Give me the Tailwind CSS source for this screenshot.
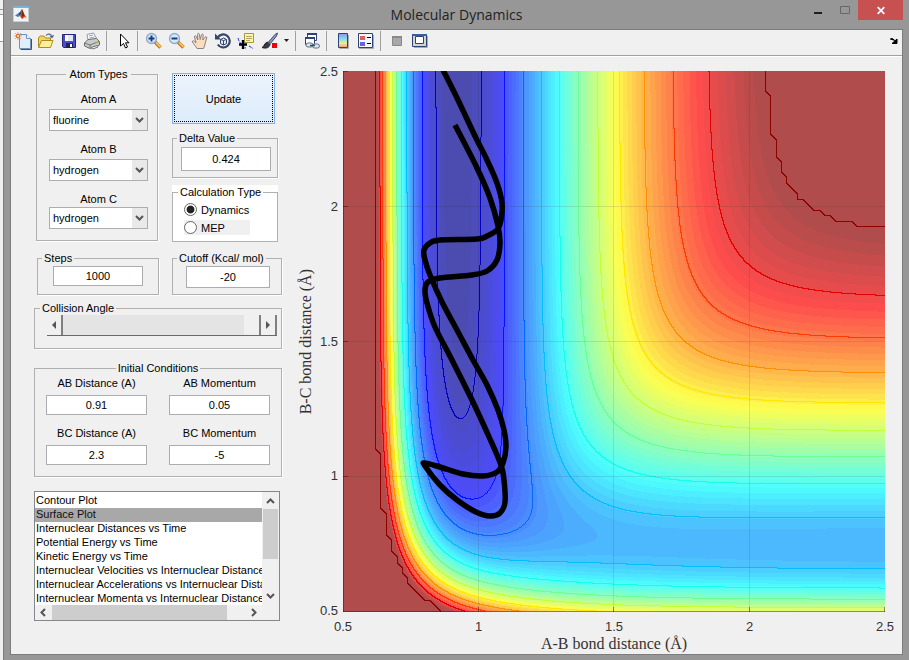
<!DOCTYPE html>
<html lang="en">
<head>
  <meta charset="UTF-8" />
  <meta name="viewport" content="width=device-width, initial-scale=1.0"/>
  <title>Molecular Dynamics</title>
  <script src="https://cdn.jsdelivr.net/npm/@tailwindcss/browser@4"></script>
</head>
<body class="flex min-h-screen bg-[#979797] font-['Liberation_Sans',Arial,sans-serif] text-[11px] leading-[14px] text-black">

  <!-- Edge of the window behind -->
  <div class="w-[3px] bg-[#efefef] flex flex-col">
    <div class="h-[10px] border-b border-[#979797]"></div>
    <div class="h-[5px] border-b border-[#979797]"></div>
    <div class="h-[27px] bg-white border-b border-[#979797]"></div>
  </div>

  <div class="flex-1 min-w-0 flex flex-col border-l border-[#7d7d7d] pl-[6px] pr-[6px] pb-[5px]">

    <!-- Title bar -->
    <header class="h-[29px] flex items-start">
      <svg class="mt-[6px] ml-[3px]" width="16" height="16" viewBox="0 0 16 16">
        <rect x="0.5" y="0.5" width="15" height="15" fill="#eef3f6" stroke="#c9cfd3"/>
        <rect width="16" height="2" fill="#79b4d8"/>
        <path d="M2 9.5 5 7.5 7 10 5 11Z" fill="#3a7fc4"/>
        <path d="M5 7.5 7 6 9 3 8.500 8 7 10Z" fill="#26527f"/>
        <path d="M9 3C10.500 6 12 10 14 12 12 10.800 11 11 9.500 13 8.500 13 8 11 7 10 8 8 8.500 5 9 3Z" fill="#d8501c"/>
        <path d="M9 3C10 5 11 8 11.500 10 10 10 9 11 8.500 12Z" fill="#8a2411"/>
      </svg>
      <h1 class="flex-1 pl-[80px] pt-[4px] text-center font-['Open_Sans',sans-serif] text-[14px] leading-[22px] text-[#222]">Molecular Dynamics</h1>
      <div class="flex">
        <button aria-label="Minimize" class="w-[27px] h-[20px] flex justify-center">
          <svg width="8" height="20" viewBox="0 0 8 20"><path d="M0 12h8v2H0z" fill="#1e1e1e"/></svg>
        </button>
        <button aria-label="Maximize" class="w-[27px] h-[20px] flex justify-center">
          <svg width="10" height="20" viewBox="0 0 10 20"><path d="M.5 6.500h9v7h-9z" fill="none" stroke="#666"/></svg>
        </button>
        <button aria-label="Close" class="w-[45px] h-[20px] bg-[#c75050] flex justify-center">
          <svg width="8" height="20" viewBox="0 0 8 20"><path d="M.7 7.200l6.600 6.600M7.300 7.200.7 13.800" stroke="#fff" stroke-width="1.700"/></svg>
        </button>
      </div>
    </header>

    <div class="flex-1 bg-[#f0f0f0] border border-[#7d7d7d] flex flex-col">

      <!-- Toolbar -->
      <nav class="h-[26px] shrink-0 flex items-center pb-[3px] border-b border-[#a0a0a0] shadow-[0_1px_0_#fff]">
        <button aria-label="New" class="w-[23px] flex justify-center">
          <svg width="18" height="18" viewBox="0 0 18 18">
            <path d="M5.500 2.500h7l4 4v10h-11z" fill="#dfeefc" stroke="#7291b8"/><path d="M12.500 2.500v4h4" fill="#fff" stroke="#7291b8"/>
            <path d="M17.500 7v10.500h-11" fill="none" stroke="#3c5070"/>
            <path d="M1 1l6 6M7 1 1 7M4 0v8M0 4h8" stroke="#f0a080" stroke-width="1"/><circle cx="4" cy="4" r="1.800" fill="#ffe070" stroke="#e06030"/>
          </svg>
        </button>
        <button aria-label="Open" class="w-[23px] flex justify-center">
          <svg width="18" height="18" viewBox="0 0 18 18">
            <path d="M1.500 15V6l1.500-2h4l1.500 2h5V9" fill="#f3d460" stroke="#b08a1c"/>
            <path d="M1.500 15.500 4.500 8.500H16l-2.500 7z" fill="#fdee9a" stroke="#b08a1c"/>
            <path d="M9 3.500C11 1 14 2 15 5M13 4.500l2.200 1L16.500 3" fill="none" stroke="#4c6a90" stroke-width="1.200"/>
          </svg>
        </button>
        <button aria-label="Save" class="w-[23px] flex justify-center">
          <svg width="18" height="18" viewBox="0 0 18 18">
            <path d="M2.500 2.500h13v13h-12l-1-1z" fill="#4c4cc8" stroke="#25257c"/>
            <path d="M5 3h8v6H5z" fill="#dfe6f6"/><path d="M5 3h3v6H5z" fill="#fff"/>
            <path d="M6 11h7v5H6z" fill="#20205a"/><path d="M10 12h2v3h-2z" fill="#fff"/>
          </svg>
        </button>
        <button aria-label="Print" class="w-[23px] flex justify-center">
          <svg width="18" height="18" viewBox="0 0 18 18">
            <path d="M5 8 4 2.500 10.500 1 14 7z" fill="#fdfdfd" stroke="#999"/><path d="M6 4l4-1M6.500 6l5-1" stroke="#8aa0c0"/>
            <path d="M1.500 11 5 7.500 13.500 6.500 16.500 9.500V13L7 16.500 1.500 14z" fill="#c9c9c9" stroke="#6d6d6d"/>
            <path d="M1.500 11 7 13 16 9.500M7 13v3" fill="none" stroke="#777"/><path d="M8 15.500l6-2 1 1.500-5 2z" fill="#eee" stroke="#777"/><path d="M13 11l1.500-.5" stroke="#c8b400"/>
          </svg>
        </button>
        <span class="w-[4px] h-5 border-r border-[#a0a0a0] mr-[4px]"></span>
        <button aria-label="Edit Plot" class="w-[23px] flex justify-center">
          <svg width="18" height="18" viewBox="0 0 18 18"><path d="M6.500 2v12l3-2.500 2 4.500 2-1-2-4.200h3.500z" fill="#fff" stroke="#000"/></svg>
        </button>
        <span class="w-[4px] h-5 border-r border-[#a0a0a0] mr-[4px]"></span>
        <button aria-label="Zoom In" class="w-[23px] flex justify-center">
          <svg width="18" height="18" viewBox="0 0 18 18">
            <path d="M10 10l5.500 5.500" stroke="#b86a1c" stroke-width="3.400"/><path d="M11 10.500l4.500 4.500" stroke="#fbc65c" stroke-width="1.800"/>
            <circle cx="6.500" cy="6.500" r="5" fill="#cfeafa" stroke="#92a9c9" stroke-width="1.300"/><path d="M3.500 6.500h6M6.500 3.500v6" stroke="#1c3a80" stroke-width="2"/>
          </svg>
        </button>
        <button aria-label="Zoom Out" class="w-[23px] flex justify-center">
          <svg width="18" height="18" viewBox="0 0 18 18">
            <path d="M10 10l5.500 5.500" stroke="#b86a1c" stroke-width="3.400"/><path d="M11 10.500l4.500 4.500" stroke="#fbc65c" stroke-width="1.800"/>
            <circle cx="6.500" cy="6.500" r="5" fill="#cfeafa" stroke="#92a9c9" stroke-width="1.300"/><path d="M3.500 6.500h6" stroke="#1c3a80" stroke-width="2"/>
          </svg>
        </button>
        <button aria-label="Pan" class="w-[23px] flex justify-center">
          <svg width="18" height="18" viewBox="0 0 18 18">
            <path d="M6 16.500C4.500 14 2.500 12 1.500 10 1 8.500 2.500 8.300 3.500 9.500L5 11 3.500 5C3.200 3.500 4.800 3.300 5.200 4.500L6.800 8 6.500 2.500C6.500 1 8.200 1 8.400 2.300L9.200 7.500 10.500 2.800C11 1.500 12.500 2 12.200 3.300L11.800 8 14 5.200C14.800 4.200 16.200 4.800 15.700 6L14.500 10 13.500 14 12.500 16.500Z" fill="#fbdcbc" stroke="#8a8088"/>
          </svg>
        </button>
        <button aria-label="Rotate 3D" class="w-[23px] flex justify-center">
          <svg width="18" height="18" viewBox="0 0 18 18">
            <path d="M3.500 6A6.500 6.500 0 1 1 3.800 12.500" fill="none" stroke="#33466c" stroke-width="2.200"/><path d="M1 1.500v6h6z" fill="#33466c"/>
            <path d="M6.500 7.500 9.500 6l3 1.500v4l-3 1.500-3-1.500zM6.500 7.500l3 1 3-1M9.500 8.500V13" fill="#e6edf6" stroke="#33466c"/>
          </svg>
        </button>
        <button aria-label="Data Cursor" class="w-[23px] flex justify-center">
          <svg width="18" height="18" viewBox="0 0 18 18">
            <path d="M7.500 1.500h9v9h-9z" fill="#fbf7a8" stroke="#a39a3c"/><path d="M9 4.500h6M9 6.500h6M9 8.500h4" stroke="#b0a860"/>
            <path d="M1 6c1 4 2 4 3 6 2 3 3 4 5 4M12 14l4 2.500" fill="none" stroke="#2020ee" stroke-dasharray="3 1"/>
            <path d="M6 8v9M2 12.500h8" stroke="#000" stroke-width="2.400"/>
          </svg>
        </button>
        <button aria-label="Brush" class="w-[25px] flex justify-center">
          <svg width="18" height="18" viewBox="0 0 18 18">
            <path d="M7.500 10 14 2.500 16.500 1 15.500 4 9.500 11.500z" fill="#8898b8" stroke="#44506c"/>
            <path d="M1 15.500c2 0 2-4.500 5.500-5.500L9 12.500C8.500 15.500 5 17 1 15.500z" fill="#3a3a44" stroke="#1c1c22"/>
            <path d="M11 11h5v5h-5z" fill="#f00000"/>
          </svg>
        </button>
        <button aria-label="Brush options" class="w-[9px] flex justify-center"><svg width="5" height="4" viewBox="0 0 5 4"><path d="M0 0h5L2.500 3z" fill="#222"/></svg></button>
        <span class="w-[5px] h-5 border-r border-[#a0a0a0] mr-[4px]"></span>
        <button aria-label="Link Plot" class="w-[23px] flex justify-center">
          <svg width="18" height="18" viewBox="0 0 18 18">
            <path d="M4.500 1.500h9v7h-9z" fill="#fff" stroke="#2d4278"/><path d="M4 1h10v2H4z" fill="#2d4278"/>
            <path d="M2.500 5.500h9v7h-9z" fill="#fff" stroke="#2d4278"/><path d="M2 5h10v2H2z" fill="#2d4278"/>
            <rect x="3" y="11" width="7" height="4" rx="2" fill="#dde6ee" stroke="#5c7288"/><rect x="9.500" y="12" width="7" height="4" rx="2" fill="#dde6ee" stroke="#5c7288"/><path d="M7 13.500h5" stroke="#36495c" stroke-width="1.500"/>
          </svg>
        </button>
        <span class="w-[4px] h-5 border-r border-[#a0a0a0] mr-[4px]"></span>
        <button aria-label="Insert Colorbar" class="w-[23px] flex justify-center">
          <svg width="18" height="18" viewBox="0 0 18 18">
            <defs><linearGradient id="cbar" x2="0" y2="1"><stop stop-color="#9a8cec"/><stop offset=".35" stop-color="#7cd8f4"/><stop offset=".7" stop-color="#f4eb90"/><stop offset="1" stop-color="#f49a78"/></linearGradient></defs>
            <path d="M14.500 3v13.500h-9" fill="none" stroke="#aaa"/><path d="M4.500 1.500h9v14h-9z" fill="url(#cbar)" stroke="#2d4278"/>
          </svg>
        </button>
        <button aria-label="Insert Legend" class="w-[23px] flex justify-center">
          <svg width="18" height="18" viewBox="0 0 18 18">
            <path d="M16.500 3v13.500H2" fill="none" stroke="#aaa"/><path d="M1.500 1.500h14v14h-14z" fill="#f8f8fc" stroke="#2d4278"/>
            <path d="M3 4h5v4H3z" fill="#e06060"/><path d="M3 10h5v4H3z" fill="#6464e0"/><path d="M10 5.500h4M10 11.500h4" stroke="#000"/>
          </svg>
        </button>
        <span class="w-[4px] h-5 border-r border-[#a0a0a0] mr-[4px]"></span>
        <button aria-label="Hide Plot Tools" class="w-[23px] flex justify-center">
          <svg width="18" height="18" viewBox="0 0 18 18"><path d="M4.500 4.500h9v9h-9z" fill="#a8a8a8" stroke="#888"/><path d="M4 4h10v2H4z" fill="#888"/></svg>
        </button>
        <button aria-label="Show Plot Tools" class="w-[23px] flex justify-center">
          <svg width="18" height="18" viewBox="0 0 18 18">
            <path d="M16.500 4v11.500H3" fill="none" stroke="#aaa"/><path d="M1.500 2.500h14v12h-14z" fill="#d4d4c8" stroke="#2d4278"/>
            <path d="M1 2h15v2H1z" fill="#3c5ca0"/><path d="M4.500 4.500h8v7h-8z" fill="#fff" stroke="#2d4278"/>
          </svg>
        </button>
        <button aria-label="Dock Figure" class="ml-auto mr-[4px]">
          <svg width="8" height="6" viewBox="0 0 8 6"><path d="M0 1.500 1.500 0 5.500 3M7 1v4.500H2z" fill="#000" stroke="#000"/></svg>
        </button>
      </nav>

      <main class="flex-1 flex items-start pt-[11px] pr-[17px]">

        <!-- Controls -->
        <aside class="w-[248px] shrink-0 ml-[23px] flex flex-col">
          <div class="flex justify-between h-[184px]">
            <fieldset class="w-[122px] h-[174px] ml-[2px] border border-[#b0b0b0] shadow-[1px_1px_0_#fff] flex flex-col items-center pl-[3px] pt-[11px]">
              <legend class="mx-auto px-1">Atom Types</legend>
              <label for="atomA">Atom A</label>
              <div class="relative mt-[3px] mb-[11px]">
                <select id="atomA" class="block appearance-none w-[99px] h-[22px] pl-[3px] border border-[#abadb3] bg-white"><option>fluorine</option><option>hydrogen</option></select>
                <svg class="absolute right-px top-px pointer-events-none bg-[#e9e9e9]" width="15" height="20" viewBox="0 0 15 20"><path d="M4 8 7.500 11.500 11 8" fill="none" stroke="#555" stroke-width="2"/></svg>
              </div>
              <label for="atomB">Atom B</label>
              <div class="relative mt-[3px] mb-[11px]">
                <select id="atomB" class="block appearance-none w-[99px] h-[22px] pl-[3px] border border-[#abadb3] bg-white"><option>hydrogen</option><option>fluorine</option></select>
                <svg class="absolute right-px top-px pointer-events-none bg-[#e9e9e9]" width="15" height="20" viewBox="0 0 15 20"><path d="M4 8 7.500 11.500 11 8" fill="none" stroke="#555" stroke-width="2"/></svg>
              </div>
              <label for="atomC">Atom C</label>
              <div class="relative mt-px">
                <select id="atomC" class="block appearance-none w-[99px] h-[22px] pl-[3px] border border-[#abadb3] bg-white"><option>hydrogen</option><option>fluorine</option></select>
                <svg class="absolute right-px top-px pointer-events-none bg-[#e9e9e9]" width="15" height="20" viewBox="0 0 15 20"><path d="M4 8 7.500 11.500 11 8" fill="none" stroke="#555" stroke-width="2"/></svg>
              </div>
            </fieldset>

            <div class="w-[110px] flex flex-col">
              <button class="w-[103px] h-[51px] mt-[6px] border border-[#7eb4ea] bg-linear-to-b from-[#ecf4fc] to-[#dcecfc] p-px">
                <span class="flex h-full items-center justify-center border border-dotted border-black">Update</span>
              </button>
              <fieldset class="w-[106px] h-[47px] mt-[7px] border border-[#b0b0b0] shadow-[1px_1px_0_#fff] flex justify-center pl-[2px] pt-[2px]">
                <legend class="ml-[2px] px-[2px]"><label for="delta">Delta Value</label></legend>
                <input id="delta" value="0.424" class="w-[90px] h-[24px] border border-[#abadb3] bg-white text-center"/>
              </fieldset>
              <div class="w-[106px] mt-[7px] bg-white">
                <fieldset class="h-[57px] border border-[#b0b0b0] pl-[11px] pt-[3px] flex flex-col gap-[3px]">
                  <legend class="-ml-[6px] px-[2px]">Calculation Type</legend>
                  <label class="flex items-center h-[15px]"><input type="radio" name="calc" checked class="appearance-none w-[13px] h-[13px] rounded-full border border-[#666] bg-white bg-radial from-[#222] from-45% to-white to-55% mr-[4px]"/>Dynamics</label>
                  <label class="flex items-center h-[15px] w-[66px] bg-[#f0f0f0]"><input type="radio" name="calc" class="appearance-none w-[13px] h-[13px] rounded-full border border-[#666] bg-white mr-[4px]"/>MEP</label>
                </fieldset>
              </div>
            </div>
          </div>

          <div class="flex justify-between">
            <fieldset class="w-[122px] h-[44px] ml-[3px] border border-[#b0b0b0] shadow-[1px_1px_0_#fff] flex justify-center pt-px">
              <legend class="ml-[4px] px-[2px]"><label for="steps">Steps</label></legend>
              <input id="steps" value="1000" class="w-[90px] h-[20px] border border-[#abadb3] bg-white text-center"/>
            </fieldset>
            <fieldset class="w-[110px] h-[44px] border border-[#b0b0b0] shadow-[1px_1px_0_#fff] flex justify-center pl-[2px] pt-px">
              <legend class="ml-[2px] px-[2px]"><label for="cutoff">Cutoff (Kcal/ mol)</label></legend>
              <input id="cutoff" value="-20" class="w-[84px] h-[22px] border border-[#abadb3] bg-white text-center"/>
            </fieldset>
          </div>

          <fieldset class="h-[48px] mt-[6px] border border-[#b0b0b0] shadow-[1px_1px_0_#fff] pl-[12px] pr-[4px]">
            <legend class="-ml-[7px] px-[2px]"><label for="angle">Collision Angle</label></legend>
            <div class="flex h-[21px] border-b border-[#696969]">
              <button aria-label="Decrease" class="w-[16px] border-r-2 border-[#808080] flex items-center justify-center"><svg width="4" height="8" viewBox="0 0 4 8"><path d="M4 0v8L0 4z" fill="#555"/></svg></button>
              <input id="angle" type="range" min="0" max="180" value="180" class="appearance-none flex-1 min-w-0 h-[20px] bg-[#e4e4e4] [&::-webkit-slider-thumb]:appearance-none [&::-webkit-slider-thumb]:w-[17px] [&::-webkit-slider-thumb]:h-[20px] [&::-webkit-slider-thumb]:bg-[#f0f0f0] [&::-webkit-slider-thumb]:border-r-2 [&::-webkit-slider-thumb]:border-[#808080]"/>
              <button aria-label="Increase" class="w-[16px] border-r-2 border-[#808080] flex items-center justify-center"><svg width="4" height="8" viewBox="0 0 4 8"><path d="M0 0v8L4 4z" fill="#555"/></svg></button>
            </div>
          </fieldset>

          <fieldset class="h-[116px] mt-[12px] border border-[#b0b0b0] shadow-[1px_1px_0_#fff] px-[11px] pt-px">
            <legend class="mx-auto px-[2px]">Initial Conditions</legend>
            <div class="grid grid-cols-[101px_101px] justify-between gap-y-[11px] text-center">
              <div><label for="abD" class="block mb-[5px]">AB Distance (A)</label><input id="abD" value="0.91" class="block w-full h-[20px] border border-[#abadb3] bg-white text-center"/></div>
              <div><label for="abM" class="block mb-[5px]">AB Momentum</label><input id="abM" value="0.05" class="block w-full h-[20px] border border-[#abadb3] bg-white text-center"/></div>
              <div><label for="bcD" class="block mb-[5px]">BC Distance (A)</label><input id="bcD" value="2.3" class="block w-full h-[20px] border border-[#abadb3] bg-white text-center"/></div>
              <div><label for="bcM" class="block mb-[5px]">BC Momentum</label><input id="bcM" value="-5" class="block w-full h-[20px] border border-[#abadb3] bg-white text-center"/></div>
            </div>
          </fieldset>

          <!-- Plot type list -->
          <div class="w-[246px] h-[130px] mt-[14px] border border-[#828790] bg-white flex flex-col">
            <div class="flex h-[113px]">
              <select size="8" aria-label="Plot type" class="appearance-none flex-1 min-w-0 h-[111px] mt-[2px] overflow-hidden border-0 p-0 outline-none bg-white text-[11px]">
                <option class="h-[14px] min-h-0 p-0 pl-px leading-[14px]">Contour Plot</option>
                <option selected class="h-[14px] min-h-0 p-0 pl-px leading-[14px] bg-linear-to-r from-[#a8a8a8] to-[#a8a8a8]">Surface Plot</option>
                <option class="h-[14px] min-h-0 p-0 pl-px leading-[14px]">Internuclear Distances vs Time</option>
                <option class="h-[14px] min-h-0 p-0 pl-px leading-[14px]">Potential Energy vs Time</option>
                <option class="h-[14px] min-h-0 p-0 pl-px leading-[14px]">Kinetic Energy vs Time</option>
                <option class="h-[14px] min-h-0 p-0 pl-px leading-[14px]">Internuclear Velocities vs Internuclear Distance</option>
                <option class="h-[14px] min-h-0 p-0 pl-px leading-[14px]">Internuclear Accelerations vs Internuclear Distance</option>
                <option class="h-[14px] min-h-0 p-0 pl-px leading-[14px]">Internuclear Momenta vs Internuclear Distance</option>
              </select>
              <div class="w-[17px] bg-[#f0f0f0] flex flex-col items-center">
                <svg width="17" height="17" viewBox="0 0 17 17"><path d="M5 11 8.500 7.500 12 11" fill="none" stroke="#555" stroke-width="2"/></svg>
                <div class="w-[15px] h-[50px] bg-[#cdcdcd]"></div>
                <svg class="mt-auto" width="17" height="17" viewBox="0 0 17 17"><path d="M5 6 8.500 9.500 12 6" fill="none" stroke="#555" stroke-width="2"/></svg>
              </div>
            </div>
            <div class="flex-1 bg-[#f0f0f0] flex items-center">
              <svg width="17" height="15" viewBox="0 0 17 15"><path d="M10 4 6.500 7.500 10 11" fill="none" stroke="#555" stroke-width="2"/></svg>
              <div class="w-[175px] h-[15px] bg-[#cdcdcd]"></div>
              <svg class="ml-[18px]" width="17" height="15" viewBox="0 0 17 15"><path d="M7 4 10.500 7.500 7 11" fill="none" stroke="#555" stroke-width="2"/></svg>
            </div>
          </div>
        </aside>

        <!-- Contour plot -->
        <section class="flex-1 min-w-0 ml-[14px] mt-[4px] flex text-[13px] leading-[16px] text-[#333]">
          <div class="w-[20px] flex items-center justify-center pb-[41px]">
            <span class="[writing-mode:vertical-rl] rotate-180 whitespace-nowrap font-['Liberation_Serif',serif] text-[16px] leading-[20px]">B-C bond distance (Å)</span>
          </div>
          <div class="flex-1 min-w-0 grid grid-cols-[22px_1fr] gap-x-[5px]">
            <div class="flex flex-col justify-between text-right -my-[7px]">
              <span>2.5</span><span>2</span><span>1.5</span><span>1</span><span>0.5</span>
            </div>
            <div class="relative aspect-[542/541]">
              <canvas id="surface" width="542" height="541" class="block w-full h-full"></canvas>
              <svg class="absolute inset-0 w-full h-full" viewBox="343 71 542 541">
                <path d="M478.500 71v541M613.500 71v541M749.500 71v541M343 206.500h542M343 341.500h542M343 476.500h542" stroke="#262626" stroke-opacity=".12"/>
                <path d="M343.500 71v541M343 611.500h542M478.500 612v-5M613.500 612v-5M749.500 612v-5M884.500 612v-5M343 206.500h5M343 341.500h5M343 476.500h5M343 71.500h5" stroke="#400000" stroke-opacity=".45"/>
                <path id="trajectory" fill="none" stroke="#000" stroke-width="5.500" stroke-linejoin="round"/>
              </svg>
            </div>
            <div></div>
            <div>
              <div class="flex justify-between mt-[7px]">
                <span class="w-0 flex justify-center">0.5</span><span class="w-0 flex justify-center">1</span><span class="w-0 flex justify-center">1.5</span><span class="w-0 flex justify-center">2</span><span class="w-0 flex justify-center">2.5</span>
              </div>
              <p class="text-center font-['Liberation_Serif',serif] text-[16px] leading-[18px]">A-B bond distance (Å)</p>
            </div>
          </div>
        </section>
      </main>
    </div>
  </div>

  <script>
    // LEPS potential for collinear F-H-H, kcal/mol and angstrom
    const HF = { D: 141.2, b: 2.2187, r: 0.919, s: 0.167 };
    const HH = { D: 109.4, b: 1.942, r: 0.7419, s: 0.187 };

    function terms(p, r) {
      const e = Math.exp(-p.b * (r - p.r));
      const e1 = p.D * (e * e - 2 * e);
      const e3 = p.D / 2 * (e * e + 2 * e);
      return [
        ((e1 + e3) + p.s * (e1 - e3)) / 2 / (1 + p.s),
        ((e1 - e3) + p.s * (e1 + e3)) / 2 / (1 + p.s)
      ];
    }

    function energy(x, y) {
      const [qa, ja] = terms(HF, x);
      const [qb, jb] = terms(HH, y);
      const [qc, jc] = terms(HF, x + y);
      return qa + qb + qc - Math.sqrt(((ja - jb) ** 2 + (jb - jc) ** 2 + (jc - ja) ** 2) / 2);
    }

    const MIN = -141, CAP = -22.4;
    const TOP = -23.4, STEP = 10.27; // contour levels: TOP - k * STEP

    function jet(t) {
      const c = (o) => Math.max(0, Math.min(1, 1.5 - Math.abs(4 * t - o)));
      return [c(3) * 255, c(2) * 255, c(1) * 255];
    }

    const canvas = document.getElementById("surface");
    const ctx = canvas.getContext("2d");
    const W = canvas.width, H = canvas.height, PX = 270.7, GRID = 0.02;
    const img = ctx.createImageData(W, H);

    // Nodes over the cutoff form the plateau
    const over = [];
    for (let i = 0; i <= 101; i++) {
      over.push([]);
      for (let j = 0; j <= 101; j++) over[i].push(energy(0.5 + i * GRID, 0.5 + j * GRID) >= CAP);
    }

    function onPlateau(x, y) {
      const gx = (x - 0.5) / GRID, gy = (y - 0.5) / GRID;
      const i = Math.floor(gx), j = Math.floor(gy), u = gx - i, v = gy - j;
      const a = over[i][j], b = over[i + 1][j], c = over[i][j + 1], d = over[i + 1][j + 1];
      const n = a + b + c + d;
      if (n === 4) return true;
      if (n < 3) return false;
      if (!a) return u + v >= 1;
      if (!d) return u + v <= 1;
      if (!b) return v >= u;
      return u >= v;
    }

    const band = new Int8Array((W + 1) * (H + 1));
    const value = new Float32Array((W + 1) * (H + 1));
    for (let py = 0; py <= H; py++) {
      for (let px = 0; px <= W; px++) {
        const x = 0.5 + px / PX, y = 0.5 + Math.max(0, H - 1 - py) / PX;
        const k = py * (W + 1) + px;
        const e = Math.min(energy(x, y), CAP - 0.01);
        value[k] = e;
        band[k] = onPlateau(x, y) ? 0 : 1 + Math.max(0, Math.floor((TOP - e) / STEP));
      }
    }

    for (let py = 0; py < H; py++) {
      for (let px = 0; px < W; px++) {
        const k = py * (W + 1) + px;
        const lo = Math.min(band[k], band[k + 1], band[k + W + 1]);
        const hi = Math.max(band[k], band[k + 1], band[k + W + 1]);
        let rgb;
        if (lo !== hi) {
          rgb = jet(Math.max(0, 1 - (hi - 1) * STEP / (CAP - MIN)) * 0.97 + 0.015);
        } else {
          const n = Math.max(0, Math.min(63, Math.floor((value[k] - MIN) / (CAP - MIN) * 64)));
          rgb = jet((n + 1) / 65).map((c) => c * 0.7 + 76);
        }
        img.data.set([rgb[0], rgb[1], rgb[2], 255], (py * W + px) * 4);
      }
    }
    ctx.putImageData(img, 0, 0);

    // Trajectory, smoothed through the sampled points
    const pts = [
      [443, 70], [458, 100], [475, 136], [487, 160], [497, 183], [502, 203], [501, 220], [497, 230],
      [487, 236], [477, 239], [440, 240], [430, 243], [424, 250], [425, 260], [430, 275], [442, 302],
      [457, 330], [473, 360], [487, 385], [498, 410], [504, 430], [506, 447], [503, 463], [497, 472],
      [483, 476], [463, 474], [440, 467], [425, 463], [425, 466], [440, 485], [457, 500], [476, 512],
      [490, 516], [500, 513], [505, 502], [504, 480], [501, 465], [490, 439], [472, 400], [452, 360],
      [435, 327], [427, 303], [425, 290], [428, 282], [440, 278], [472, 275], [487, 271], [497, 260],
      [500, 243], [498, 226], [490, 198], [477, 168], [455, 125]
    ];
    let d = `M${pts[0]}`;
    for (let i = 0; i < pts.length - 1; i++) {
      const p0 = pts[i - 1] || pts[i], p1 = pts[i], p2 = pts[i + 1], p3 = pts[i + 2] || p2;
      d += `C${p1[0] + (p2[0] - p0[0]) / 6},${p1[1] + (p2[1] - p0[1]) / 6} ${p2[0] - (p3[0] - p1[0]) / 6},${p2[1] - (p3[1] - p1[1]) / 6} ${p2}`;
    }
    document.getElementById("trajectory").setAttribute("d", d);
  </script>

</body>
</html>
